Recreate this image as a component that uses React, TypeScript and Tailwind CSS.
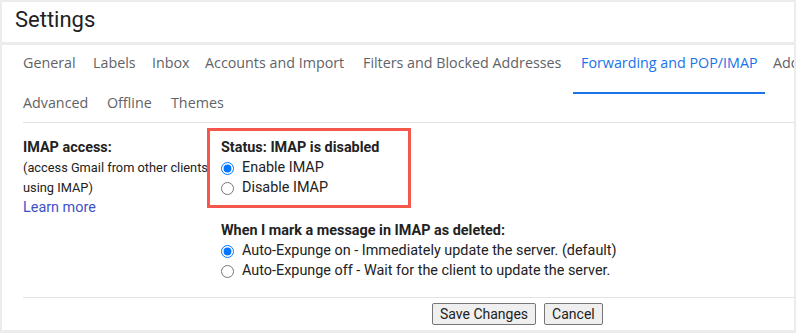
const tabsTop = [
  { label: 'General', w: 'w-[70px]' },
  { label: 'Labels', w: 'w-[59px]' },
  { label: 'Inbox', w: 'w-[53px]' },
  { label: 'Accounts and Import', w: 'w-[158px]' },
  { label: 'Filters and Blocked Addresses', w: 'w-[218px]' },
  { label: 'Forwarding and POP/IMAP', w: 'w-[192px]', active: true },
  { label: 'Add-ons', w: 'w-[80px]' },
]

const tabsBottom = [
  { label: 'Advanced', w: 'w-[84px]' },
  { label: 'Offline', w: 'w-[64px]' },
  { label: 'Themes', w: 'w-[75px]' },
]

type Tab = { label: string; w: string; active?: boolean }

function TabRow({ tabs, className }: { tabs: Tab[]; className: string }) {
  return (
    <div className={`flex flex-nowrap ${className}`}>
      {tabs.map((t) => (
        <div
          key={t.label}
          className={`relative shrink-0 px-2 whitespace-nowrap text-[14.3px] leading-[20px] ${t.w} ${
            t.active ? 'text-[#1a73e8] text-center' : 'text-[#5f6368]'
          }`}
        >
          {t.label}
          {t.active && <span className="absolute left-0 right-0 bottom-[-10px] h-[2px] bg-[#1a73e8]" />}
        </div>
      ))}
    </div>
  )
}

function Radio({ label, checked, name }: { label: string; checked?: boolean; name: string }) {
  return (
    <label className="flex items-center gap-[8px] h-[20px] whitespace-nowrap">
      <input type="radio" name={name} defaultChecked={checked} className="w-[13px] h-[13px] m-0" />
      <span>{label}</span>
    </label>
  )
}

export default function App() {
  return (
    <div className="w-[796px] h-[333px] bg-[#ececec] pl-[2px] pr-[2px] pt-[2px] pb-[3px] flex flex-col gap-[3px] overflow-hidden font-['Roboto',sans-serif] text-[#222]">
      {/* header */}
      <div className="h-[40px] shrink-0 bg-white pl-[13px] pt-[4px]">
        <h1 className="text-[22px] leading-[28px] font-normal text-[#202124]">Settings</h1>
      </div>

      {/* settings panel */}
      <div className="flex-1 bg-white overflow-hidden">
        <div className="pl-[13px] font-['Open_Sans',sans-serif] overflow-hidden">
          <TabRow tabs={tabsTop} className="h-[39px] pt-[8px]" />
          <TabRow tabs={tabsBottom} className="h-[38px] pt-[9px]" />
        </div>

        <div className="ml-[21px]">
          <div className="h-px bg-[#e3e3e3]" />

          <div className="flex mt-[5px] text-[14.4px] leading-[20px]">
            <div className="w-[184px] shrink-0 pt-[10px]">
              <p className="font-bold">IMAP access:</p>
              <p className="text-[12.8px] whitespace-nowrap">
                (access Gmail from other clients
                <br />
                using IMAP)
              </p>
              <a className="text-[#3d52c6]">Learn more</a>
            </div>

            <div className="flex flex-col">
              <div className="w-[204px] border-[3px] border-[#f4574b] pl-[11px] py-[7px]">
                <p className="font-bold">Status: IMAP is disabled</p>
                <Radio name="imap" label="Enable IMAP" checked />
                <Radio name="imap" label="Disable IMAP" />
              </div>

              <div className="pl-[14px] mt-[13px]">
                <p className="font-bold">When I mark a message in IMAP as deleted:</p>
                <Radio name="expunge" label="Auto-Expunge on - Immediately update the server. (default)" checked />
                <Radio name="expunge" label="Auto-Expunge off - Wait for the client to update the server." />
              </div>
            </div>
          </div>

          <div className="h-px bg-[#e3e3e3] mt-[16px]" />

          <div className="flex gap-[8px] ml-[409px] mt-[5px] text-[14px]">
            <button className="h-[22px] px-[7px] bg-[#efefef] border border-[#767676] rounded-[2px] leading-[20px]">
              Save Changes
            </button>
            <button className="h-[22px] px-[7px] bg-[#efefef] border border-[#767676] rounded-[2px] leading-[20px]">
              Cancel
            </button>
          </div>
        </div>
      </div>
    </div>
  )
}
